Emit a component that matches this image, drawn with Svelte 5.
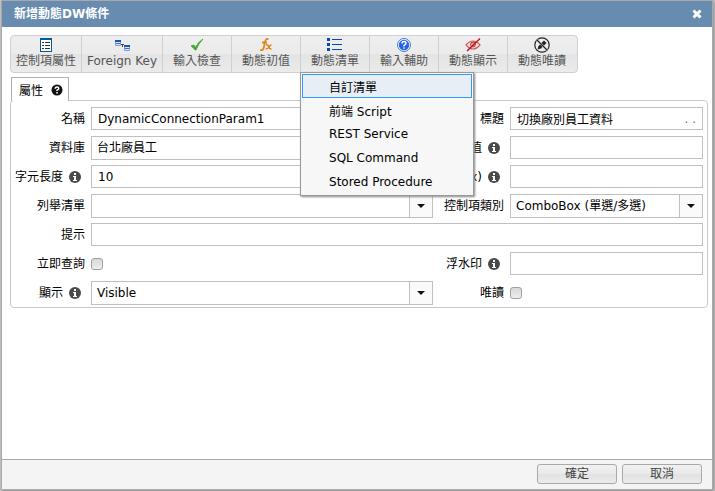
<script>
	const tools = [
		{ icon: 'props', label: '控制項屬性' },
		{ icon: 'key', label: 'Foreign Key' },
		{ icon: 'check', label: '輸入檢查' },
		{ icon: 'fx', label: '動態初值' },
		{ icon: 'list', label: '動態清單' },
		{ icon: 'help', label: '輸入輔助' },
		{ icon: 'eye', label: '動態顯示' },
		{ icon: 'readonly', label: '動態唯讀' }
	];

	const menuItems = ['自訂清單', '前端 Script', 'REST Service', 'SQL Command', 'Stored Procedure'];

	let menuOpen = $state(true);
	let activeItem = $state(0);

	let name = $state('DynamicConnectionParam1');
	let title = $state('切換廠別員工資料');
	let length = $state('10');

	function onTool(tool) {
		if (tool.icon === 'list') menuOpen = !menuOpen;
	}

	function pick(i) {
		activeItem = i;
		menuOpen = false;
	}
</script>

{#snippet info()}
	<svg class="info" viewBox="0 0 12 12" aria-hidden="true">
		<circle cx="6" cy="6" r="6" fill="#4a4a4a" />
		<path d="M5 2h2v2H5zM4 5h3v4h1v1H4V9h1V6H4z" fill="#fff" />
	</svg>
{/snippet}

{#snippet arrow()}
	<svg class="arrow" viewBox="0 0 22 22" aria-hidden="true">
		<path d="M7 9h8l-4 4z" fill="#111" />
	</svg>
{/snippet}

{#snippet toolIcon(icon)}
	<svg class="tool-icon" viewBox="0 0 16 16" aria-hidden="true">
		{#if icon === 'props'}
			<path d="M2 1h12v14H2z" fill="#005a9e" />
			<path d="M3 3h10v11H3z" fill="#fff" />
			<path d="M4 5h2v1H4zM7 5h5v1H7zM4 8h2v1H4zM7 8h5v1H7zM4 11h2v1H4zM7 11h5v1H7z" fill="#333" />
		{:else if icon === 'key'}
			<path d="M6 7.500h4M8.500 7v3" fill="none" stroke="#444" />
			<path d="M1.500 3.500h5v5h-5zM10.500 8.500h5v5h-5z" fill="#dbe8fb" stroke="#7d9fdc" />
			<path d="M1 3h6v2H1zM10 8h6v2h-6z" fill="#2450b0" />
			<path d="M2 6h4v1H2zM11 11h4v1h-4z" fill="#3c6cc8" />
		{:else if icon === 'check'}
			<path d="M2 9l3-1 1.500 2.500Q9 5 14 2 9 7 7 13H6Q4 10 2 9z" fill="#3aa935" stroke="#3aa935" stroke-width=".8" />
		{:else if icon === 'fx'}
			<path d="M10.500 2.500Q8 .5 7 5L5.800 10.500Q5 14 2 13M4 5.500h5" fill="none" stroke="#e0861a" stroke-width="1.800" />
			<path d="M8 8Q10 7 10.500 9.500T13.500 12M13.500 8Q12 8 11 10T7.500 12" fill="none" stroke="#e0861a" stroke-width="1.400" />
		{:else if icon === 'list'}
			<path d="M0 1h3v3H0zM0 6h3v3H0zM0 11h3v3H0zM5 2h10v1H5zM5 7h10v1H5zM5 12h10v1H5z" fill="#0a46b4" />
		{:else if icon === 'help'}
			<circle cx="8" cy="8" r="6.500" fill="#fff" stroke="#3c78d8" />
			<circle cx="8" cy="8" r="5.200" fill="#2563e0" />
			<path d="M6 6.500Q6 4.500 8 4.500T10 6.300Q10 7.500 8 8.500v1M8 10.500v1.300" fill="none" stroke="#fff" stroke-width="1.500" />
		{:else if icon === 'eye'}
			<path d="M1 8q7-8 14 0-7 8-14 0z" fill="#f6e4e4" stroke="#d05a5c" stroke-width="1.200" />
			<circle cx="8" cy="7.500" r="2.500" fill="#e8a0a0" stroke="#c83030" />
			<path d="M2 14L15 1.500" stroke="#c01818" stroke-width="1.500" />
		{:else}
			<circle cx="8" cy="8" r="7.200" fill="none" stroke="#222" stroke-width="1.200" />
			<path d="M3.500 12.500l1-3.500 5.500-5.500 2.500 2.500L7 11.500z" fill="#222" />
			<path d="M3 3l10 10" stroke="#eee" stroke-width="2" />
			<path d="M3 3l10 10" stroke="#222" stroke-width="1.200" />
		{/if}
	</svg>
{/snippet}

<div class="dialog">
	<header class="titlebar">
		<h1>新增動態DW條件</h1>
		<button class="close" aria-label="Close">
			<svg viewBox="0 0 10 10"><path d="M1.500 1.500l7 7M8.500 1.500l-7 7" stroke="#fff" stroke-width="3" /></svg>
		</button>
	</header>

	<main class="content">
		<div class="toolbar">
			{#each tools as tool}
				<div class="tool-wrap">
					<button class="tool" onclick={() => onTool(tool)}>
						{@render toolIcon(tool.icon)}
						<span>{tool.label}</span>
					</button>
					{#if tool.icon === 'list' && menuOpen}
						<div class="menu" role="menu">
							{#each menuItems as item, i}
								<button class="menu-item" class:active={i === activeItem} role="menuitem" onclick={() => pick(i)}>{item}</button>
							{/each}
						</div>
					{/if}
				</div>
			{/each}
		</div>

		<div class="tabs">
			<button class="tab">
				屬性
				<svg class="tab-help" viewBox="0 0 12 12" aria-hidden="true">
					<circle cx="6" cy="6" r="5.500" fill="#111" />
					<path d="M4.200 4.800Q4.200 3 6 3t1.800 1.500Q7.800 5.500 6 6.300V7M6 8v1.500" fill="none" stroke="#fff" stroke-width="1.500" />
				</svg>
			</button>
		</div>

		<form class="panel">
			<label for="name">名稱</label>
			<input id="name" class="field" type="text" bind:value={name} />
			<label for="title">標題</label>
			<div class="with-more">
				<input id="title" class="field" type="text" bind:value={title} />
				<button type="button" class="more">. .</button>
			</div>

			<label for="db">資料庫</label>
			<div class="select">
				<select id="db"><option>台北廠員工</option></select>
				{@render arrow()}
			</div>
			<label for="default">值 {@render info()}</label>
			<input id="default" class="field" type="text" />

			<label for="length">字元長度 {@render info()}</label>
			<input id="length" class="field" type="text" bind:value={length} />
			<label for="width">x) {@render info()}</label>
			<input id="width" class="field" type="text" />

			<label for="enum">列舉清單</label>
			<div class="select">
				<select id="enum"><option></option></select>
				{@render arrow()}
			</div>
			<label for="type">控制項類別</label>
			<div class="select">
				<select id="type"><option>ComboBox (單選/多選)</option></select>
				{@render arrow()}
			</div>

			<label for="hint">提示</label>
			<input id="hint" class="field wide" type="text" />

			<label for="instant">立即查詢</label>
			<input id="instant" class="check" type="checkbox" />
			<label for="watermark">浮水印 {@render info()}</label>
			<input id="watermark" class="field" type="text" />

			<label for="display">顯示 {@render info()}</label>
			<div class="select">
				<select id="display"><option>Visible</option></select>
				{@render arrow()}
			</div>
			<label for="readonly">唯讀</label>
			<input id="readonly" class="check" type="checkbox" />
		</form>
	</main>

	<footer class="footer">
		<button class="action">確定</button>
		<button class="action">取消</button>
	</footer>
</div>

<style>
	:global(body) {
		background: #c8c8c8;
	}

	.dialog {
		display: flex;
		flex-direction: column;
		box-sizing: border-box;
		min-height: calc(100vh - 1px);
		margin: 0 2px 1px 1px;
		border: 1px solid #a9a9a9;
		background: #fff;
		box-shadow: 1px 1px 3px #888;
		color: #000;
	}

	.dialog,
	button,
	input,
	select {
		font-family: "DejaVu Sans", "Noto Sans CJK TC", sans-serif;
		font-size: 12px;
	}

	button {
		cursor: pointer;
	}

	.titlebar {
		display: flex;
		align-items: center;
		justify-content: space-between;
		height: 26px;
		padding: 0 10px 0 12px;
		background: #688caf;
		color: #fff;
	}

	.titlebar h1 {
		margin: 0;
		font-size: 12px;
		line-height: 26px;
		font-weight: bold;
	}

	.close {
		display: flex;
		padding: 0;
		border: none;
		background: none;
	}

	.close svg {
		width: 10px;
		height: 10px;
	}

	.content {
		flex: 1;
		padding: 8px 4px 8px 8px;
	}

	/* toolbar */
	.toolbar {
		display: flex;
		width: fit-content;
		border: 1px solid #d0d0d0;
		border-radius: 4px;
		background: linear-gradient(#eee, #ebebeb 50%, #e4e4e4 51%, #ebebeb);
	}

	.tool-wrap {
		position: relative;
		border-left: 1px solid #d0d0d0;
	}

	.tool-wrap:first-child {
		border-left: none;
	}

	.tool-wrap:last-child {
		padding-right: 1px;
	}

	.tool {
		display: flex;
		flex-direction: column;
		align-items: center;
		min-width: 68px;
		height: 36px;
		padding: 1px 5px 0;
		border: none;
		background: none;
		color: #555;
		line-height: 16px;
		white-space: nowrap;
	}

	.tool-icon {
		width: 16px;
		height: 16px;
	}

	.menu {
		position: absolute;
		top: 100%;
		left: -1px;
		z-index: 10;
		width: 170px;
		padding: 1px;
		box-sizing: content-box;
		border: 1px solid #999;
		background: #f7f7f7;
		box-shadow: 1px 1px 2px #888;
	}

	.menu-item {
		display: block;
		width: 100%;
		height: 24px;
		padding: 0 26px;
		border: 1px solid transparent;
		background: none;
		color: #000;
		text-align: left;
		white-space: nowrap;
	}

	.menu-item.active,
	.menu-item:hover {
		border-color: #3399ff;
		background: #e7eef6;
	}

	/* tabs */
	.tabs {
		display: flex;
		margin: 4px 1px 0;
	}

	.tab {
		display: flex;
		align-items: center;
		gap: 8px;
		height: 24px;
		margin-bottom: -1px;
		padding: 0 5px 0 7px;
		border: 1px solid #b0b0b0;
		border-bottom: none;
		background: #fff;
		color: #000;
		z-index: 1;
	}

	.tab-help {
		width: 12px;
		height: 12px;
	}

	/* form */
	.panel {
		display: grid;
		grid-template-columns: 80px 342fr 77px 193fr;
		grid-auto-rows: 29px;
		align-items: center;
		padding: 3px 4px 0 0;
		border: 1px solid #c8c8c8;
		border-radius: 4px;
	}

	.panel label {
		display: flex;
		align-items: center;
		justify-content: flex-end;
		gap: 6px;
		padding-right: 6px;
		line-height: 16px;
		white-space: nowrap;
	}

	.panel label:has(.info) {
		padding-right: 10px;
	}

	.info {
		width: 12px;
		height: 12px;
	}

	.field,
	.select {
		box-sizing: border-box;
		width: 100%;
		min-width: 0;
		border: 1px solid #c0c0c0;
		background: #fff;
	}

	.field {
		height: 23px;
		padding: 0 6px;
	}

	.wide {
		grid-column: 2 / -1;
	}

	.with-more {
		position: relative;
		min-width: 0;
		display: flex;
	}

	.more {
		position: absolute;
		right: 1px;
		top: 1px;
		height: 21px;
		padding: 0 6px;
		border: none;
		background: none;
		color: #5a6fa8;
	}

	.select {
		display: grid;
		grid-template-columns: 1fr 23px;
		height: 24px;
	}

	.arrow {
		grid-area: 1 / 2;
		width: 22px;
		height: 22px;
		border-left: 1px solid #c0c0c0;
		background: #fafafa;
		pointer-events: none;
		z-index: 1;
	}

	.select select {
		grid-area: 1 / 1 / 2 / 3;
		width: 100%;
		height: 22px;
		padding: 0 28px 0 5px;
		border: none;
		background: transparent;
		appearance: none;
		color: #000;
	}

	.check {
		appearance: none;
		width: 12px;
		height: 12px;
		margin: 0;
		border: 1px solid #a0a0a0;
		border-radius: 3px;
		background: linear-gradient(#d8d8d8, #eee);
	}

	.check:checked {
		background: #688caf;
	}

	/* footer */
	.footer {
		display: flex;
		justify-content: flex-end;
		gap: 5px;
		padding: 4px 10px 5px;
		border-top: 1px solid #a9a9a9;
		background: #f4f4f4;
	}

	.action {
		width: 80px;
		height: 20px;
		padding: 0;
		border: 1px solid #a9a9a9;
		border-radius: 3px;
		background: linear-gradient(#f1f1f1, #e9e9e9 50%, #e2e2e2 51%, #ebebeb);
		color: #444;
		line-height: 16px;
	}
</style>
